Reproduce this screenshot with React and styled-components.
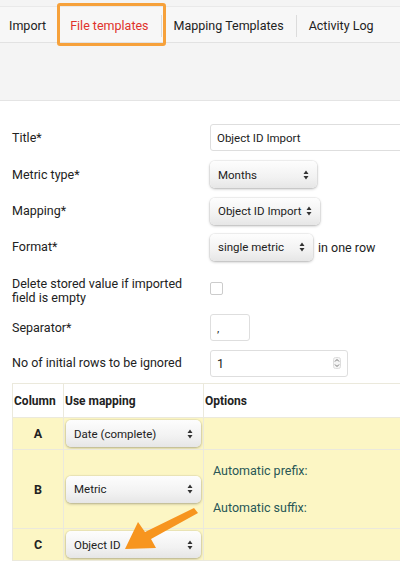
import styled, { createGlobalStyle } from "styled-components";

const Global = createGlobalStyle`
  body {
    margin: 0;
    background: #fff;
    font-family: Roboto, "Liberation Sans", Arial, sans-serif;
    color: #222;
    overflow: hidden;
  }
`;

const Top = styled.div`
  height: 101px;
  background: #f4f4f4;
  border-bottom: 1px solid #e4e4e4;
  box-sizing: border-box;
  padding-top: 6px;
`;

const Tabs = styled.div`
  display: flex;
  align-items: center;
  height: 37px;
  box-sizing: border-box;
  background: #f7f7f7;
  border-top: 1px solid #e9e9e9;
  border-bottom: 1px solid #e2e2e2;
  padding: 3px 0 0 9px;
  font-size: 12.5px;
`;

const Tab = styled.div`
  position: relative;
  padding-right: 12px;
  margin-right: 12px;
  color: ${(p) => (p.active ? "#e0322b" : "#222")};
  border-right: ${(p) => (p.sep ? "1px solid #dcdcdc" : "none")};
  line-height: 22px;
  white-space: nowrap;
`;

const Highlight = styled.div`
  position: absolute;
  box-sizing: border-box;
  left: -13px;
  top: -12px;
  width: 109px;
  height: 43px;
  border: 3px solid #f6a13b;
  border-radius: 3px;
`;

const Form = styled.div`
  padding: 18px 0 0 12px;
`;

const Row = styled.div`
  box-sizing: border-box;
  display: grid;
  grid-template-columns: 198px 1fr;
  align-items: center;
  height: ${(p) => p.h || 36}px;
  padding-top: ${(p) => p.pt || 0}px;
  font-size: 12.5px;
`;

const Label = styled.div`
  line-height: 14px;
`;

const Control = styled.div`
  display: flex;
  align-items: center;
  gap: 5px;
`;

const TextInput = styled.div`
  box-sizing: border-box;
  height: 27px;
  width: ${(p) => p.w}px;
  border: 1px solid #dedede;
  border-radius: 3px;
  display: flex;
  align-items: center;
  justify-content: space-between;
  padding: 0 6px;
  font-size: 11.5px;
  background: #fff;
`;

const SelectBox = styled.div`
  box-sizing: border-box;
  height: 27px;
  width: ${(p) => p.w}px;
  border-radius: 5px;
  background: linear-gradient(#fdfdfd, #f2f2f2 60%, #e6e6e6);
  box-shadow: 0 1px 3px rgba(0, 0, 0, 0.28), 0 0 0 1px rgba(0, 0, 0, 0.04);
  display: flex;
  align-items: center;
  justify-content: space-between;
  padding: 0 8px 0 8px;
  font-size: 11.5px;
  color: #222;
`;

const Arrows = () => (
  <svg width="6" height="10" viewBox="0 0 6 10">
    <path d="M3 0.5 L5.5 4 H0.5 Z M3 9.5 L5.5 6 H0.5 Z" fill="#333" />
  </svg>
);

const Spinner = () => (
  <svg width="8" height="12" viewBox="0 0 8 12">
    <rect x="0.5" y="0.5" width="7" height="11" rx="2" fill="#f4f4f4" stroke="#ddd" />
    <path d="M2 4.5 L4 2.5 L6 4.5 M2 7.5 L4 9.5 L6 7.5" fill="none" stroke="#666" strokeWidth="0.9" />
  </svg>
);

const Select = ({ w, children }) => (
  <SelectBox w={w}>
    <span>{children}</span>
    <Arrows />
  </SelectBox>
);

const Check = styled.div`
  width: 11px;
  height: 11px;
  border: 1px solid #ccc;
  border-radius: 2px;
  background: #fff;
  margin-top: -4px;
`;

const TableWrap = styled.div`
  position: relative;
  margin: 2px 0 0 12px;
`;

const Table = styled.table`
  border-collapse: collapse;
  table-layout: fixed;
  width: 400px;
  font-size: 12px;
  td, th {
    border: 1px solid #ebe9dc;
    padding: 0;
  }
  th {
    background: #fff;
    text-align: left;
    font-weight: bold;
    height: 33px;
    padding-left: 1px;
  }
`;

const Tr = styled.tr`
  background: #fcf6c4;
  height: ${(p) => p.h}px;
`;

const Letter = styled.td`
  text-align: center;
  font-weight: bold;
  font-size: 12.5px;
`;

const MapCell = styled.td`
  padding: 0 2px !important;
`;

const Opt = styled.div`
  color: #285656;
  padding-left: 9px;
  line-height: 15px;
  font-size: 12.5px;
  margin: ${(p) => p.m};
`;

const Pointer = styled.svg`
  position: absolute;
  left: -12px;
  top: -383px;
  pointer-events: none;
`;

export default function App() {
  return (
    <>
      <Global />
      <Top>
        <Tabs>
          <Tab>Import</Tab>
          <Tab active sep>
            <Highlight />
            File templates
          </Tab>
          <Tab sep>Mapping Templates</Tab>
          <Tab>Activity Log</Tab>
        </Tabs>
      </Top>
      <Form>
        <Row h={37}>
          <Label>Title*</Label>
          <Control>
            <TextInput w={200}>Object ID Import</TextInput>
          </Control>
        </Row>
        <Row h={37}>
          <Label>Metric type*</Label>
          <Control>
            <Select w={107}>Months</Select>
          </Control>
        </Row>
        <Row>
          <Label>Mapping*</Label>
          <Control>
            <Select w={110}>Object ID Import</Select>
          </Control>
        </Row>
        <Row>
          <Label>Format*</Label>
          <Control>
            <Select w={103}>single metric</Select>
            in one row
          </Control>
        </Row>
        <Row h={45} pt={6}>
          <Label>
            Delete stored value if imported
            <br />
            field is empty
          </Label>
          <Control>
            <Check />
          </Control>
        </Row>
        <Row h={35}>
          <Label>Separator*</Label>
          <Control>
            <TextInput w={40}>,</TextInput>
          </Control>
        </Row>
        <Row>
          <Label>No of initial rows to be ignored</Label>
          <Control>
            <TextInput w={138}>
              <span style={{ fontSize: 12.5 }}>1</span>
              <Spinner />
            </TextInput>
          </Control>
        </Row>
      </Form>
      <TableWrap>
        <Table>
          <colgroup>
            <col style={{ width: 51 }} />
            <col style={{ width: 140 }} />
            <col />
          </colgroup>
          <thead>
            <tr>
              <th>Column</th>
              <th>Use mapping</th>
              <th>Options</th>
            </tr>
          </thead>
          <tbody>
            <Tr h={32}>
              <Letter>A</Letter>
              <MapCell>
                <Select w={135}>Date (complete)</Select>
              </MapCell>
              <td />
            </Tr>
            <Tr h={79}>
              <Letter>B</Letter>
              <MapCell>
                <Select w={135}>Metric</Select>
              </MapCell>
              <td>
                <Opt m="0 0 22px">Automatic prefix:</Opt>
                <Opt>Automatic suffix:</Opt>
              </td>
            </Tr>
            <Tr h={32}>
              <Letter>C</Letter>
              <MapCell>
                <Select w={135}>Object ID</Select>
              </MapCell>
              <td />
            </Tr>
          </tbody>
        </Table>
        <Pointer width="400" height="562" viewBox="0 0 400 562">
          <polygon
            points="194,508 198,513 151,539 156,548 125,549 138,522 145,532"
            fill="#f7951f"
          />
        </Pointer>
      </TableWrap>
    </>
  );
}
